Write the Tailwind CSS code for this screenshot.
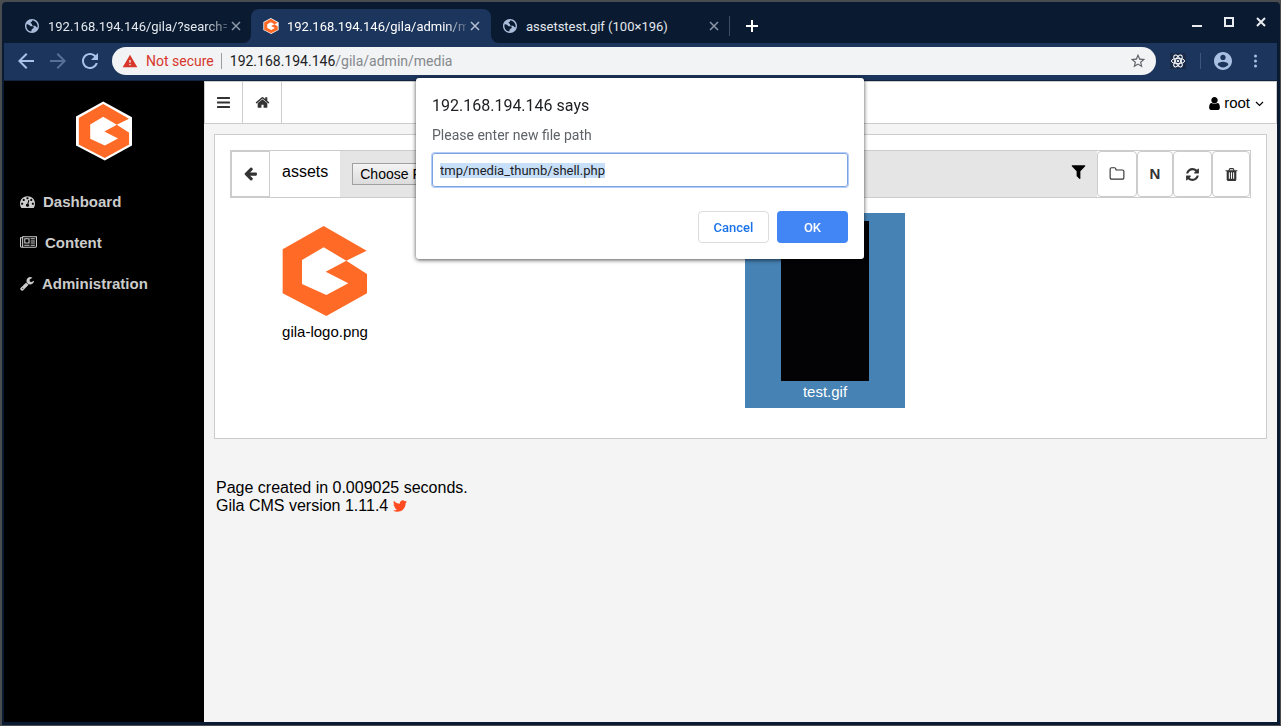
<!DOCTYPE html>
<html lang="en">
<head>
<meta charset="utf-8">
<title>Gila CMS - Media</title>
<script src="https://cdn.jsdelivr.net/npm/@tailwindcss/browser@4"></script>
</head>
<body class="flex h-screen flex-col overflow-hidden bg-[#4a4d50] pt-[2px] pr-px pb-px pl-[2px] font-['Liberation_Sans',sans-serif] text-black">
<svg class="hidden" aria-hidden="true">
  <symbol id="globe" viewBox="2 2 20 20"><path d="M12 2C6.48 2 2 6.48 2 12s4.48 10 10 10 10-4.48 10-10S17.52 2 12 2zM11 19.9C7 19.400 4 16.100 4 12c0-1 .3-2 .7-3l3.300 1.500c1 .5 1 1.500 2 2h3c1 0 1.500.8 1.500 1.700 0 1.800-2.500 1.300-3 2.800zM13.500 11.500c-1.500 0-1.500-1-1.500-2s-2-.5-2-2 1.500-1 2-2V4c4.500 0 8 3.600 8 8 0 .8-.1 1.500-.3 2.200-1.700 0-2-2.700-3.700-2.700z" fill-rule="evenodd"/></symbol>
  <symbol id="gila" viewBox="0 0 254 270"><path fill="#ff6a26" fill-rule="evenodd" d="M123 0L252 74 191 104 253 144V202L131 270 0 202V70zM123 64L58 102V174L131 207 197 172 129 137 191 104z"/></symbol>
  <symbol id="gila-badge" viewBox="-13 -12 280 294"><path fill="#fff" d="M123-12L267 66V208L131 282-13 208V62z"/><use href="#gila" x="0" y="0" width="254" height="270"/></symbol>
  <symbol id="close" viewBox="0 0 10 10"><path d="M1 1l8 8M9 1l-8 8" stroke="currentColor" fill="none"/></symbol>
</svg>
<div class="flex min-h-0 flex-1 flex-col rounded-t-[4px] bg-[#0a1a30] pr-[3px] pb-[3px] pl-[2px]">
  <div class="flex h-[41px] shrink-0 items-end pl-2 font-[Roboto,sans-serif] text-[13px] text-[#e3e8ee]">
    <div class="flex h-[34px] w-[239px] items-center pr-[10px] pl-[13px]">
      <svg class="size-[14px] shrink-0 fill-[#a9bddb]"><use href="#globe"/></svg>
      <span class="ml-[9px] w-[179px] pt-px whitespace-nowrap [mask-image:linear-gradient(to_right,black_88%,rgba(0,0,0,0.3))]">192.168.194.146/gila/?search=</span>
      <button aria-label="Close tab" class="ml-1 text-[#8c98a9]"><svg class="size-[10px] stroke-[1.5]"><use href="#close"/></svg></button>
    </div>
    <div class="relative flex h-[34px] w-[240px] items-center rounded-t-lg bg-[#1c355c] pr-[10px] pl-3">
      <svg class="absolute bottom-0 -left-2 size-2 fill-[#1c355c]" viewBox="0 0 8 8"><path d="M8 0v8H0a8 8 0 0 0 8-8z"/></svg>
      <svg class="absolute -right-2 bottom-0 size-2 fill-[#1c355c]" viewBox="0 0 8 8"><path d="M0 0v8h8a8 8 0 0 1-8-8z"/></svg>
      <svg class="size-4 shrink-0"><use href="#gila-badge"/></svg>
      <span class="ml-2 w-[179px] pt-px whitespace-nowrap text-white [mask-image:linear-gradient(to_right,black_88%,rgba(0,0,0,0.2))]">192.168.194.146/gila/admin/m</span>
      <button aria-label="Close tab" class="ml-1 text-[#b4c0d2]"><svg class="size-[10px] stroke-[1.5]"><use href="#close"/></svg></button>
    </div>
    <div class="flex h-[34px] w-[238px] items-center pr-[10px] pl-3">
      <svg class="size-[14px] shrink-0 fill-[#a9bddb]"><use href="#globe"/></svg>
      <span class="ml-[9px] w-[174px] pt-px whitespace-nowrap">assetstest.gif (100×196)</span>
      <button aria-label="Close tab" class="ml-[9px] text-[#8c98a9]"><svg class="size-[10px] stroke-[1.5]"><use href="#close"/></svg></button>
    </div>
    <div class="mb-[7px] h-5 w-px bg-[#3f4c5f]"></div>
    <button aria-label="New tab" class="mb-[11px] ml-4 text-white"><svg class="size-3" viewBox="0 0 12 12"><path d="M6 0v12M0 6h12" stroke="currentColor" stroke-width="2"/></svg></button>
    <div class="mr-[11px] mb-4 ml-auto flex items-end gap-[22px] text-[#e9ecf0]">
      <button aria-label="Minimise"><svg class="size-[10px]" viewBox="0 0 10 10"><path d="M0 9h10" stroke="currentColor" stroke-width="2"/></svg></button>
      <button aria-label="Maximise"><svg class="size-[10px]" viewBox="0 0 10 10"><path d="M1 1h8v8H1z" fill="none" stroke="currentColor" stroke-width="2"/></svg></button>
      <button aria-label="Close"><svg class="size-[10px] stroke-2"><use href="#close"/></svg></button>
    </div>
  </div>
  <div class="flex h-[38px] shrink-0 items-center border-b border-[#12233f] bg-[#1c355c] pb-px pl-[14px] font-[Roboto,sans-serif] text-sm">
    <button aria-label="Back"><svg class="size-4 fill-[#a9c3e8]" viewBox="4 4 16 16"><path d="M20 11H7.83l5.59-5.59L12 4l-8 8 8 8 1.41-1.41L7.83 13H20v-2z"/></svg></button>
    <button aria-label="Forward" class="ml-4"><svg class="size-4 fill-[#56709a]" viewBox="4 4 16 16"><path d="M12 4l-1.41 1.41L16.17 11H4v2h12.17l-5.58 5.59L12 20l8-8z"/></svg></button>
    <button aria-label="Reload" class="ml-4"><svg class="size-4 fill-[#a9c3e8]" viewBox="4 4 16 16"><path d="M17.65 6.35C16.2 4.9 14.21 4 12 4c-4.42 0-7.99 3.58-7.99 8s3.57 8 7.99 8c3.73 0 6.84-2.55 7.73-6h-2.08c-.82 2.33-3.04 4-5.65 4-3.31 0-6-2.69-6-6s2.69-6 6-6c1.66 0 3.14.69 4.22 1.78L13 11h7V4l-2.35 2.35z"/></svg></button>
    <div class="ml-[14px] flex h-7 min-w-0 flex-1 items-center rounded-full bg-[#f1f3f4] pr-[10px] pl-[10px]">
      <svg class="size-4 shrink-0 fill-[#d8372b]" viewBox="0 0 24 23"><path d="M1 21h22L12 2 1 21zm12-3h-2v-2h2v2zm0-4h-2v-4h2v4z"/></svg>
      <span class="ml-2 text-[#d8372b]">Not secure</span>
      <span class="mr-2 ml-[7px] h-4 w-px bg-[#9a9da1]"></span>
      <span class="flex-1 text-[#85888c]"><span class="text-[#202124]">192.168.194.146</span>/gila/admin/media</span>
      <button aria-label="Bookmark this page"><svg class="size-4 fill-[#5f6368]" viewBox="1 1 22 22"><path d="M22 9.24l-7.19-.62L12 2 9.19 8.63 2 9.24l5.46 4.73L5.82 21 12 17.27 18.18 21l-1.63-7.03L22 9.24zM12 15.4l-3.76 2.27 1-4.28-3.32-2.88 4.38-.38L12 6.1l1.71 4.04 4.38.38-3.32 2.88 1 4.28L12 15.4z"/></svg></button>
    </div>
    <button aria-label="React developer tools" class="ml-[14px] bg-[#1a2b49]"><svg class="size-4 fill-none stroke-white" viewBox="0 0 16 16"><ellipse cx="8" cy="8" rx="6.6" ry="2.7"/><ellipse cx="8" cy="8" rx="6.6" ry="2.7" transform="rotate(60 8 8)"/><ellipse cx="8" cy="8" rx="6.6" ry="2.7" transform="rotate(120 8 8)"/><circle cx="8" cy="8" r=".8" fill="#fff"/></svg></button>
    <span class="ml-[14px] h-4 w-px bg-[#3e5580]"></span>
    <button aria-label="Profile" class="ml-[13px]"><svg class="size-[18px] fill-[#a9c0e2]" viewBox="2 2 20 20"><path d="M12 2C6.48 2 2 6.48 2 12s4.48 10 10 10 10-4.48 10-10S17.52 2 12 2zm0 3c1.66 0 3 1.34 3 3s-1.34 3-3 3-3-1.34-3-3 1.34-3 3-3zm0 14.2c-2.5 0-4.71-1.28-6-3.22.03-1.99 4-3.08 6-3.08 1.99 0 5.97 1.09 6 3.08-1.29 1.94-3.5 3.22-6 3.22z"/></svg></button>
    <button aria-label="Menu" class="mr-5 ml-[22px]"><svg class="h-[14px] w-[3px] fill-[#a9c0e2]" viewBox="0 0 3 14"><circle cx="1.5" cy="2" r="1.5"/><circle cx="1.5" cy="7" r="1.5"/><circle cx="1.5" cy="12" r="1.5"/></svg></button>
  </div>

  <div class="flex min-h-0 flex-1">
    <aside class="w-[200px] shrink-0 bg-black pt-5">
      <svg class="mx-auto h-[60px] w-[56px]"><use href="#gila-badge"/></svg>
      <nav class="mt-8 flex flex-col gap-6 pl-4 text-[15px] leading-[17px] font-bold text-[#ccc]">
        <a href="#" class="flex items-center gap-2"><svg class="h-[15px] w-[15px] fill-current" viewBox="0 0 1792 1792"><path d="M384 1152q0-53-37.5-90.5t-90.5-37.5-90.5 37.5-37.5 90.5 37.5 90.5 90.5 37.5 90.5-37.5 37.5-90.5zm192-448q0-53-37.5-90.5t-90.5-37.5-90.5 37.5-37.5 90.5 37.5 90.5 90.5 37.5 90.5-37.5 37.5-90.5zm428 481l101-382q6-26-7.5-48.5t-38.5-29.5-48 6.5-30 39.5l-101 382q-60 5-107 43.5t-63 98.5q-20 77 20 146t117 89 146-20 89-117q16-60-6-117t-72-91zm660-33q0-53-37.5-90.5t-90.5-37.5-90.5 37.5-37.5 90.5 37.5 90.5 90.5 37.5 90.5-37.5 37.5-90.5zm-640-640q0-53-37.5-90.5t-90.5-37.5-90.5 37.5-37.5 90.5 37.5 90.5 90.5 37.5 90.5-37.5 37.5-90.5zm448 192q0-53-37.5-90.5t-90.5-37.5-90.5 37.5-37.5 90.5 37.5 90.5 90.5 37.5 90.5-37.5 37.5-90.5zm320 448q0 261-141 483-19 29-54 29h-1402q-35 0-54-29-141-221-141-483 0-182 71-348t191-286 286-191 348-71 348 71 286 191 191 286 71 348z"/></svg>Dashboard</a>
        <a href="#" class="flex items-center gap-2"><svg class="h-[15px] w-[17px] fill-current" viewBox="0 0 2048 1792"><path d="M1024 512h-384v384h384v-384zm128 640v128h-640v-128h640zm0-768v640h-640v-640h640zm640 768v128h-512v-128h512zm0-256v128h-512v-128h512zm0-256v128h-512v-128h512zm0-256v128h-512v-128h512zm-1536 960v-960h-128v960q0 26 19 45t45 19 45-19 19-45zm1664 0v-1088h-1536v1088q0 33-11 64h1483q26 0 45-19t19-45zm128-1216v1216q0 80-56 136t-136 56h-1664q-80 0-136-56t-56-136v-1088h256v-128h1792z"/></svg>Content</a>
        <a href="#" class="flex items-center gap-2"><svg class="h-[15px] w-[14px] fill-current" viewBox="64 0 1664 1792"><path d="M448 1472q0-26-19-45t-45-19-45 19-19 45 19 45 45 19 45-19 19-45zm644-420l-682 682q-37 37-90 37-52 0-91-37l-106-108q-38-36-38-90 0-53 38-91l681-681q39 98 114.5 173.5t173.5 114.5zm634-435q0 39-23 106-47 134-164.5 217.5t-258.5 83.5q-185 0-316.5-131.5t-131.5-316.5 131.5-316.5 316.5-131.5q58 0 121.5 16.5t107.5 46.5q16 11 16 28t-16 28l-293 169v224l193 107q5-3 79-48.5t135.5-81 70.5-35.5q15 0 23.5 10t8.5 25z"/></svg>Administration</a>
      </nav>
    </aside>
    <main class="min-w-0 flex-1 bg-[#f4f4f4]">
      <header class="flex h-[43px] items-stretch border border-[#ccc] bg-white text-[15px]">
        <button aria-label="Toggle menu" class="flex w-[38px] items-center justify-center border-r border-[#ccc]"><svg class="h-[11px] w-[13px] fill-[#333]" viewBox="0 0 13 11"><rect width="13" height="2" rx=".5"/><rect y="4.5" width="13" height="2" rx=".5"/><rect y="9" width="13" height="2" rx=".5"/></svg></button>
        <a href="#" aria-label="Home" class="flex w-[39px] items-center justify-center border-r border-[#ccc]"><svg class="size-[15px] fill-[#333]" viewBox="0 0 1792 1792"><path d="M1472 992v480q0 26-19 45t-45 19h-384v-384h-256v384h-384q-26 0-45-19t-19-45v-480q0-1 .5-3t.5-3l575-474 575 474q1 2 1 6zm223-69l-62 74q-8 9-21 11h-3q-13 0-21-7l-692-577-692 577q-12 8-24 7-13-2-21-11l-62-74q-8-10-7-23.5t11-21.5l719-599q32-26 76-26t76 26l244 204v-195q0-14 9-23t23-9h192q14 0 23 9t9 23v408l219 182q10 8 11 21.5t-7 23.5z"/></svg></a>
        <button class="mr-3 ml-auto flex items-center pt-[2px]"><svg class="h-[15px] w-[11px] fill-black" viewBox="256 0 1280 1792"><path d="M1536 1399q0 109-62.5 187t-150.5 78h-854q-88 0-150.5-78t-62.5-187q0-85 8.5-160.5t31.5-152 58.5-131 94-89 134.5-34.5q131 128 313 128t313-128q76 0 134.5 34.5t94 89 58.5 131 31.5 152 8.5 160.5zm-256-887q0 159-112.5 271.5t-271.5 112.5-271.5-112.5-112.5-271.5 112.5-271.5 271.5-112.5 271.5 112.5 112.5 271.5z"/></svg><span class="mr-[5px] ml-1">root</span><svg class="h-[6px] w-[9px]" viewBox="0 0 9 6"><path d="M1 1l3.5 3.5L8 1" fill="none" stroke="#000" stroke-width="1.2"/></svg></button>
      </header>

      <section class="mx-[10px] mt-[10px] border border-[#ccc] bg-white px-[15px] pt-[15px] pb-[30px]">
        <div class="flex h-12 items-stretch border border-[#ccc] bg-[#e5e5e5]">
          <button aria-label="Parent folder" class="flex w-[39px] items-center justify-center border border-[#ccc] bg-white pb-[2px]"><svg class="size-[15px] fill-[#333]" viewBox="0 0 1792 1792"><path d="M1664 896v128q0 53-32.5 90.5t-84.5 37.5h-704l293 294q38 36 38 90t-38 90l-75 76q-37 37-90 37-52 0-91-37l-651-652q-37-37-37-90 0-52 37-91l651-650q38-38 91-38 52 0 90 38l75 74q38 38 38 91t-38 91l-293 293h704q52 0 84.5 37.5t32.5 90.5z"/></svg></button>
          <span class="bg-white px-3 pt-3 text-base leading-[18px]">assets</span>
          <input type="file" aria-label="Upload file" class="mt-3 ml-3 h-[22px] w-60 text-sm leading-5 file:mr-1 file:h-[22px] file:border file:border-solid file:border-[#a0a0a0] file:bg-linear-to-b file:from-[#f4f4f4] file:to-[#dcdcdc] file:px-[7px] file:text-[14px] file:text-black">
          <button aria-label="Filter" class="mr-[11px] mb-[5px] ml-auto"><svg class="size-[15px] fill-black" viewBox="128 128 1536 1536"><path d="M1595 295q17 41-14 70l-493 493v742q0 42-39 59-13 5-25 5-27 0-45-19l-256-256q-19-19-19-45v-486l-493-493q-31-29-14-70 17-39 59-39h1280q42 0 59 39z"/></svg></button>
          <div class="flex bg-white text-[15px] font-bold text-[#333]">
            <button aria-label="New folder" class="flex w-10 items-center justify-center rounded-[4px] border border-[#ccc]"><svg class="size-4 fill-current" viewBox="0 0 1792 1792"><path d="M1600 1312v-704q0-40-28-68t-68-28h-704q-40 0-68-28t-28-68v-64q0-40-28-68t-68-28h-320q-40 0-68 28t-28 68v960q0 40 28 68t68 28h1216q40 0 68-28t28-68zm128-704v704q0 92-66 158t-158 66h-1216q-92 0-158-66t-66-158v-960q0-92 66-158t158-66h320q92 0 158 66t66 158v32h672q92 0 158 66t66 158z"/></svg></button>
            <button aria-label="Rename" class="w-9 rounded-[4px] border border-[#ccc]">N</button>
            <button aria-label="Refresh" class="flex w-[39px] items-center justify-center rounded-[4px] border border-[#ccc]"><svg class="size-[15px] fill-current" viewBox="0 0 1792 1792"><path d="M1639 1056q0 5-1 7-64 268-268 434.5t-478 166.5q-146 0-282.5-55t-243.5-157l-129 129q-19 19-45 19t-45-19-19-45v-448q0-26 19-45t45-19h448q26 0 45 19t19 45-19 45l-137 137q71 66 161 102t187 36q134 0 250-65t186-179q11-17 53-117 8-23 30-23h192q13 0 22.5 9.5t9.5 22.5zm25-800v448q0 26-19 45t-45 19h-448q-26 0-45-19t-19-45 19-45l138-138q-148-137-349-137-134 0-250 65t-186 179q-11 17-53 117-8 23-30 23h-199q-13 0-22.5-9.5t-9.5-22.5v-7q65-268 270-434.5t480-166.5q146 0 284 55.5t245 156.5l130-129q19-19 45-19t45 19 19 45z"/></svg></button>
            <button aria-label="Delete" class="flex w-[38px] items-center justify-center rounded-[4px] border border-[#ccc]"><svg class="size-[15px] fill-current" viewBox="0 0 1792 1792"><path d="M704 1376v-704q0-14-9-23t-23-9h-64q-14 0-23 9t-9 23v704q0 14 9 23t23 9h64q14 0 23-9t9-23zm256 0v-704q0-14-9-23t-23-9h-64q-14 0-23 9t-9 23v704q0 14 9 23t23 9h64q14 0 23-9t9-23zm256 0v-704q0-14-9-23t-23-9h-64q-14 0-23 9t-9 23v704q0 14 9 23t23 9h64q14 0 23-9t9-23zm-544-992h448l-48-117q-7-9-17-11h-317q-10 2-17 11zm928 32v64q0 14-9 23t-23 9h-96v948q0 83-47 143.5t-113 60.5h-832q-66 0-113-58.5t-47-141.5v-952h-96q-14 0-23-9t-9-23v-64q0-14 9-23t23-9h309l70-167q15-37 54-63t79-26h320q40 0 79 26t54 63l70 167h309q14 0 23 9t9 23z"/></svg></button>
          </div>
        </div>
        <div class="mt-[15px] ml-[15px] grid grid-cols-[repeat(auto-fill,160px)] items-start gap-x-[90px] text-center text-[15px] leading-[17px]">
          <figure class="px-2 pt-[13px]"><svg class="mx-auto h-[90px] w-[86px]"><use href="#gila"/></svg><figcaption class="mt-[7px]">gila-logo.png</figcaption></figure>
          <figure class="col-start-3 bg-[#4682b4] px-2 pt-2 pb-2 text-white"><div class="mx-auto h-40 w-[88px] bg-[#030205]"></div><figcaption class="mt-[2px]">test.gif</figcaption></figure>
        </div>
      </section>

      <footer class="mt-10 pl-3 text-base leading-[18px]">
        <p>Page created in 0.009025 seconds.</p>
        <p class="flex items-center">Gila CMS version 1.11.4 <a href="#" aria-label="Twitter" class="ml-1"><svg class="size-4 fill-[#ff4b1f]" viewBox="0 0 1792 1792"><path d="M1684 408q-67 98-162 167 1 14 1 42 0 130-38 259.5t-115.5 248.5-184.5 210.5-258 146-323 54.5q-271 0-496-145 35 4 78 4 225 0 401-138-105-2-188-64.5t-114-159.5q33 5 61 5 43 0 85-11-112-23-185.5-111.5t-73.5-205.5v-4q68 38 146 41-66-44-105-115t-39-154q0-88 44-163 121 149 294.5 238.5t371.5 99.5q-8-38-8-74 0-134 94.5-228.5t228.5-94.5q140 0 236 102 109-21 205-78-37 115-142 178 93-10 186-50z"/></svg></a></p>
      </footer>
    </main>
  </div>
</div>

<div class="pointer-events-none fixed inset-x-0 top-[78px] flex justify-center pr-px font-[Roboto,sans-serif]">
  <form role="dialog" aria-labelledby="says" class="pointer-events-auto w-[448px] rounded-[3px] bg-white px-4 pt-[17px] pb-4 shadow-[0_1px_4px_rgba(0,0,0,0.7)]">
    <h2 id="says" class="text-base leading-[22px] text-[#202124]">192.168.194.146 says</h2>
    <label for="path" class="mt-[7px] block text-sm leading-[22px] text-[#5f6368]">Please enter new file path</label>
    <input id="path" type="text" value="tmp/media_thumb/shell.php" class="mt-[7px] block h-[34px] w-full rounded-[3px] border border-[#7da2e0] px-[7px] text-[13px] text-[#202124] shadow-[0_0_0_1px_#b4cdf6] outline-none selection:bg-[#c7dff8] selection:text-[#202124]">
    <div class="mt-6 flex justify-end gap-2 text-[13px] font-medium">
      <button type="button" class="h-8 w-[71px] rounded-[4px] border border-[#dadce0] pt-px text-[#1a73e8]">Cancel</button>
      <button type="button" class="h-8 w-[71px] rounded-[4px] bg-[#4285f4] pt-px text-white">OK</button>
    </div>
  </form>
</div>
<script>
  const path = document.getElementById('path');
  path.focus();
  path.select();
</script>
</body>
</html>
